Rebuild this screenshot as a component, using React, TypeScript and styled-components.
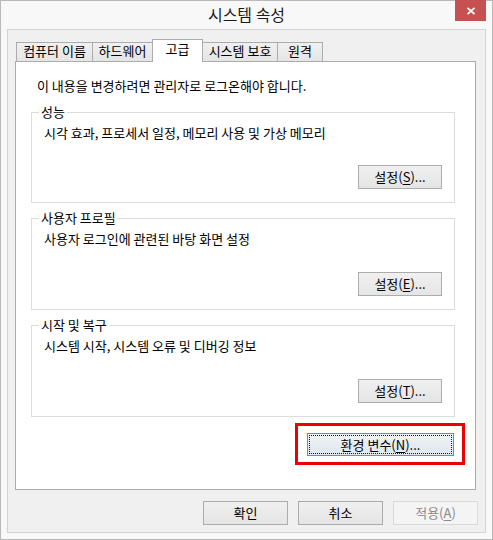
import React from "react";
import styled, { createGlobalStyle, css } from "styled-components";

const Global = createGlobalStyle`
  html, body { margin: 0; padding: 0; background: #ffffff; }
  body {
    font-family: "Noto Sans CJK KR", "Noto Sans", sans-serif;
    font-size: 13px;
    color: #000;
  }
  * { box-sizing: border-box; }
`;

const Window = styled.div`
  position: relative;
  width: 493px;
  height: 540px;
  border: 1px solid #b9b9b9;
  background: #f8f8f8;
  padding: 0 6px 6px 6px;
  display: flex;
  flex-direction: column;
`;

const TitleBar = styled.div`
  height: 28px;
  display: flex;
  align-items: center;
  justify-content: center;
  font-size: 16px;
  line-height: 18px;
  color: #1b1b1b;
  padding-bottom: 2px;
`;

const CloseButton = styled.div`
  position: absolute;
  top: -1px;
  right: 6px;
  width: 31px;
  height: 21px;
  background: #c75050;
  display: flex;
  align-items: center;
  justify-content: center;
`;

const Client = styled.div`
  flex: 1;
  border: 1px solid #d3d3d3;
  background: #f0f0f0;
  padding: 9px 0 7px 0;
  display: flex;
  flex-direction: column;
`;

const TabRow = styled.div`
  height: 22px;
  margin-left: 8px;
  display: flex;
  align-items: flex-end;
`;

const Tab = styled.div<{ $w: number; $active?: boolean }>`
  width: ${(p) => p.$w}px;
  margin-left: -1px;
  &:first-child { margin-left: 0; }
  border: 1px solid #acacac;
  border-bottom: none;
  text-align: center;
  white-space: nowrap;
  ${(p) =>
    p.$active
      ? css`
          position: relative;
          z-index: 1;
          height: 23px;
          margin-bottom: -1px;
          background: #ffffff;
          line-height: 16px;
          padding-top: 1px;
        `
      : css`
          height: 19px;
          background: linear-gradient(#f0f0f0, #e5e5e5);
          line-height: 15px;
          padding-top: 0px;
        `}
`;

const Panel = styled.div`
  height: 429px;
  margin: 0 9px 0 7px;
  border: 1px solid #acacac;
  background: #ffffff;
  padding-top: 16px;
  display: flex;
  flex-direction: column;
`;

const Intro = styled.div`
  margin-left: 21px;
  line-height: 16px;
`;

const GroupBox = styled.div<{ $h: number; $mt: number }>`
  margin: ${(p) => p.$mt}px 0 0 15px;
  width: 424px;
  height: ${(p) => p.$h}px;
  border: 1px solid #dcdcdc;
  display: flex;
  flex-direction: column;
`;

const GroupTitle = styled.div`
  align-self: flex-start;
  margin: -9px 0 0 7px;
  padding: 0 2px;
  background: #ffffff;
  line-height: 16px;
`;

const GroupText = styled.div`
  margin: 5px 0 0 12px;
  line-height: 16px;
`;

const GroupAction = styled.div`
  margin-top: auto;
  align-self: flex-end;
  margin-right: 12px;
  margin-bottom: 13px;
`;

const Highlight = styled.div`
  align-self: flex-end;
  margin: 6px 10px 0 0;
  border: 3px solid #ee0000;
  padding: 7px 8px 6px 9px;
`;

const Button = styled.div<{ $w: number; $h: number; $variant?: "default" | "disabled" }>`
  width: ${(p) => p.$w}px;
  height: ${(p) => p.$h}px;
  border: 1px solid #acacac;
  background: linear-gradient(#f0f0f0, #e5e5e5);
  display: flex;
  align-items: center;
  justify-content: center;
  line-height: 16px;
  color: #000;
  white-space: nowrap;
  ${(p) =>
    p.$variant === "default" &&
    css`
      border-color: #3c9ae6;
      background: linear-gradient(#eef3f8, #e1e6ec);
      outline: 1px dotted #1a1a1a;
      outline-offset: -3px;
    `}
  ${(p) =>
    p.$variant === "disabled" &&
    css`
      border-color: #d9d9d9;
      background: #f4f4f4;
      color: #8a8a8a;
    `}
`;

const Mnemonic = styled.span`
  text-decoration: underline;
  text-underline-offset: 2px;
`;

const ButtonRow = styled.div`
  margin: 11px 7px 0 0;
  display: flex;
  justify-content: flex-end;
  gap: 10px;
`;

const tabs = [
  { label: "컴퓨터 이름", w: 77 },
  { label: "하드웨어", w: 61 },
  { label: "고급", w: 51, active: true },
  { label: "시스템 보호", w: 76 },
  { label: "원격", w: 46 },
];

const groups = [
  { title: "성능", text: "시각 효과, 프로세서 일정, 메모리 사용 및 가상 메모리", key: "S", h: 91, mt: 18 },
  { title: "사용자 프로필", text: "사용자 로그인에 관련된 바탕 화면 설정", key: "E", h: 92, mt: 15 },
  { title: "시작 및 복구", text: "시스템 시작, 시스템 오류 및 디버깅 정보", key: "T", h: 92, mt: 15 },
];

export default function App() {
  return (
    <>
      <Global />
      <Window>
        <TitleBar>시스템 속성</TitleBar>
        <CloseButton>
          <svg width="10" height="8" viewBox="0 0 10 8">
            <path d="M1.5 0.8 L8.5 7.2 M8.5 0.8 L1.5 7.2" stroke="#ffffff" strokeWidth="1.8" fill="none" />
          </svg>
        </CloseButton>
        <Client>
          <TabRow>
            {tabs.map((t) => (
              <Tab key={t.label} $w={t.w} $active={t.active}>
                {t.label}
              </Tab>
            ))}
          </TabRow>
          <Panel>
            <Intro>이 내용을 변경하려면 관리자로 로그온해야 합니다.</Intro>
            {groups.map((g) => (
              <GroupBox key={g.title} $h={g.h} $mt={g.mt}>
                <GroupTitle>{g.title}</GroupTitle>
                <GroupText>{g.text}</GroupText>
                <GroupAction>
                  <Button $w={84} $h={24}>
                    설정(<Mnemonic>{g.key}</Mnemonic>)...
                  </Button>
                </GroupAction>
              </GroupBox>
            ))}
            <Highlight>
              <Button $w={147} $h={23} $variant="default">
                환경 변수(<Mnemonic>N</Mnemonic>)...
              </Button>
            </Highlight>
          </Panel>
          <ButtonRow>
            <Button $w={85} $h={24}>확인</Button>
            <Button $w={85} $h={24}>취소</Button>
            <Button $w={85} $h={24} $variant="disabled">
              적용(<Mnemonic>A</Mnemonic>)
            </Button>
          </ButtonRow>
        </Client>
      </Window>
    </>
  );
}
